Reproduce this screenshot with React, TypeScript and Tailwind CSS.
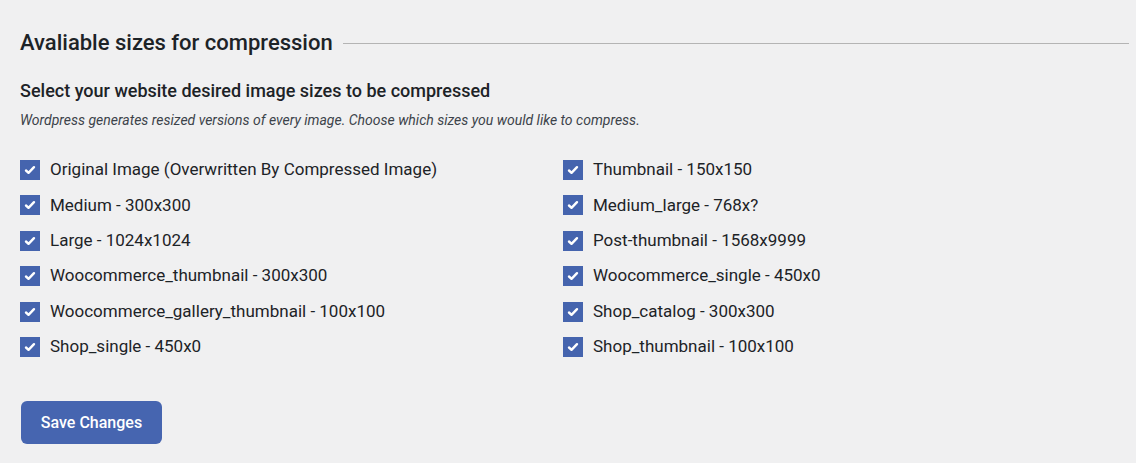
const leftSizes = [
  'Original Image (Overwritten By Compressed Image)',
  'Medium - 300x300',
  'Large - 1024x1024',
  'Woocommerce_thumbnail - 300x300',
  'Woocommerce_gallery_thumbnail - 100x100',
  'Shop_single - 450x0',
];

const rightSizes = [
  'Thumbnail - 150x150',
  'Medium_large - 768x?',
  'Post-thumbnail - 1568x9999',
  'Woocommerce_single - 450x0',
  'Shop_catalog - 300x300',
  'Shop_thumbnail - 100x100',
];

function CheckRow({ label }: { label: string }) {
  return (
    <label className="flex items-center gap-[10px] h-[20px]">
      <span className="w-[20px] h-[20px] bg-[#4564ae] flex items-center justify-center shrink-0">
        <svg width="12" height="10" viewBox="0 0 12 10" fill="none">
          <path d="M2 5.5l2.5 2.3L10 2.2" stroke="#fff" strokeWidth="2.4" strokeLinecap="round" strokeLinejoin="round" />
        </svg>
      </span>
      <span className="text-[17px] text-[#1d2327]">{label}</span>
    </label>
  );
}

export default function App() {
  return (
    <div className="min-h-screen bg-[#f0f0f1] pl-[20px] pr-[7px] pt-[29px] font-['Roboto',sans-serif]">
      <div className="flex items-center gap-[10px]">
        <h2 className="text-[22px] font-medium text-[#1d2327] leading-[28px]">Avaliable sizes for compression</h2>
        <div className="flex-1 h-px bg-[#b4b4b4] mt-[1px]"></div>
      </div>

      <h3 className="mt-[22px] text-[18px] font-medium text-[#1d2327] leading-[24px]">
        Select your website desired image sizes to be compressed
      </h3>
      <p className="mt-[9px] text-[14px] italic text-[#3c434a] leading-[16px]">
        Wordpress generates resized versions of every image. Choose which sizes you would like to compress.
      </p>

      <div className="mt-[32px] grid grid-cols-2 w-[1086px]">
        <div className="flex flex-col gap-[15.4px]">
          {leftSizes.map((s) => (
            <CheckRow key={s} label={s} />
          ))}
        </div>
        <div className="flex flex-col gap-[15.4px]">
          {rightSizes.map((s) => (
            <CheckRow key={s} label={s} />
          ))}
        </div>
      </div>

      <button className="mt-[44px] ml-[1px] w-[141px] h-[43px] pt-[2px] rounded-[6px] bg-[#4665b0] text-white text-[16px] font-medium">
        Save Changes
      </button>
    </div>
  );
}
